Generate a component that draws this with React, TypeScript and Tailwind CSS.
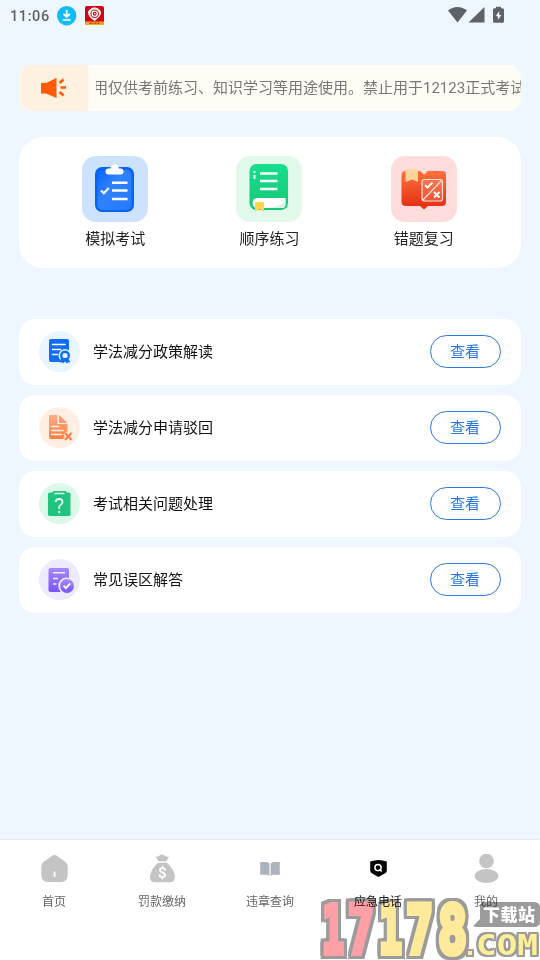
import type { ReactNode } from 'react';

const font = "font-[Roboto,'Noto_Sans_CJK_SC',sans-serif]";

function StatusBar() {
  return (
    <header className="flex h-8 items-center pl-[10px] pr-[35px] text-[#5f6368]">
      <span className="w-[47px] whitespace-nowrap pt-px text-[14.5px] font-medium tracking-[0.6px]">11:06</span>
      <svg className="block h-5 w-5" viewBox="0 0 20 20">
        <circle cx="9.700" cy="9.700" r="9.700" fill="#12bdf6" />
        <path d="M9.700 4v6.500M6.500 7.800l3.200 3.200 3.200-3.200M5.700 14h8" fill="none" stroke="#fff" strokeWidth="1.700" />
      </svg>
      <svg className="ml-2 block h-5 w-5" viewBox="0 0 20 20">
        <rect x="0" y="0" width="19" height="19" rx="2" fill="#cc0712" />
        <path d="M0 15.500h19V17a2 2 0 0 1-2 2H2a2 2 0 0 1-2-2z" fill="#f7a51c" />
        <path d="M3 6.500C3.500 3 7.500 1.500 9.500 1.500S15.500 3 16 6.500c0 3-2.500 5.500-6.500 8.500C5.500 12 3 9.500 3 6.500z" fill="#fff" />
        <circle cx="9.700" cy="7.700" r="4.300" fill="#cc0712" />
        <circle cx="9.700" cy="7.700" r="2.600" fill="none" stroke="#fff" strokeWidth="1.300" />
        <circle cx="9.700" cy="7.700" r=".8" fill="#fff" />
        <path d="M4.500 17.300h2m1 0h1m1 0h2m1 0h2" stroke="#c73812" strokeWidth="1.500" />
      </svg>
      <svg className="ml-auto block h-5 w-[58px]" viewBox="0 0 58 20">
        <path d="M1 4.500C6.500-.3 14.500-.3 20 4.500L10.500 16.500z" fill="#5f6368" />
        <path d="M37.500 1v15.500h-16z" fill="#5f6368" />
        <path d="M49 .8h5v1.500h1.500q1.500 0 1.500 1.500v11.500q0 1.500-1.500 1.500h-8q-1.500 0-1.500-1.500V3.800q0-1.500 1.500-1.500H49z" fill="#5f6368" />
        <path d="M52.200 5l-3.500 5.300h2.200V14l3.500-5h-2.200z" fill="#eef6ff" />
      </svg>
    </header>
  );
}

function Megaphone() {
  return (
    <svg className="block h-[22px] w-[26px]" viewBox="0 0 26 22">
      <path d="M0 6H5L15.500 1v20L5 16.500H0z" fill="#ff5b05" />
      <path d="M18.500 6l4-3.500M19.500 10.500h5.500M18.500 15l4 3.500" stroke="#ff5b05" strokeWidth="2.600" />
    </svg>
  );
}

function ExamIcon() {
  return (
    <svg className="block h-full w-full" viewBox="0 0 66 66">
      <defs>
        <linearGradient id="exam" x2="1" y2="1">
          <stop stopColor="#0965fc" />
          <stop offset=".4" stopColor="#2f82ff" />
          <stop offset="1" stopColor="#247aff" />
        </linearGradient>
      </defs>
      <rect x="13" y="11" width="39" height="45" rx="7" fill="#0864f6" />
      <rect x="15.500" y="14" width="34" height="40" rx="5" fill="url(#exam)" />
      <path d="M28.500 12.500a4.200 4.200 0 0 1 8.400 0h1.600q3 0 3 3t-3 3h-12q-3 0-3-3t3-3z" fill="#fff" />
      <path d="M30 26.700h15.500M30 34.500h15.500M30 43h15.500" stroke="#fff" strokeWidth="2.600" />
      <path d="M19 34.500l2.800 2.800 5-5.300" fill="none" stroke="#fff" strokeWidth="2" />
    </svg>
  );
}

function BookIcon() {
  return (
    <svg className="block h-full w-full" viewBox="0 0 66 66">
      <defs>
        <linearGradient id="book" x2="0" y2="1">
          <stop stopColor="#16df8e" />
          <stop offset="1" stopColor="#16c875" />
        </linearGradient>
      </defs>
      <rect x="13.500" y="8" width="38.500" height="46" rx="7" fill="url(#book)" />
      <path d="M49.500 42H22q-5.500 0-5.500 5t5.500 5h24q3.500 0 3.500-4z" fill="#fff" />
      <path d="M49.500 42v6q0 3-3.500 4H29q19-1 20.500-10z" fill="#d8f6e6" />
      <path d="M24 17.500h17.500M24 25h17.500M24 33h17.500" stroke="#fff" strokeWidth="2.500" />
      <path d="M18.500 15v2M18.500 19v4" stroke="#e7fff4" strokeWidth="2" />
      <path d="M19 46h9v10l-4.500-3-4.500 3z" fill="#ffd64d" />
    </svg>
  );
}

function MistakeIcon() {
  return (
    <svg className="block h-full w-full" viewBox="0 0 66 66">
      <defs>
        <linearGradient id="mistake" x2="0" y2="1">
          <stop stopColor="#ff713c" />
          <stop offset="1" stopColor="#e22c12" />
        </linearGradient>
      </defs>
      <path d="M15 15h14l4 3.500 4-3.500h14q4 0 4 4v27q0 4-4 4H37l-4 3.500-4-3.500H15q-4.500 0-4.500-4V19q0-4 4.500-4z" fill="url(#mistake)" />
      <path d="M14.500 13.500H27v12.500l-6-2.500-6.500 2.500z" fill="#ffd49a" />
      <rect x="31" y="23.500" width="20.500" height="21.500" rx="2.500" fill="#ffffff22" stroke="#ffe1d8" strokeWidth="1.200" />
      <path d="M32 44l18.500-19.500" stroke="#ffe1d8" strokeWidth="1.200" />
      <path d="M34 29l2.500 2.500 5-5M43 36l5.500 5.500m0-5.500L43 41.500" fill="none" stroke="#fff" strokeWidth="1.900" />
    </svg>
  );
}

function PolicyIcon() {
  return (
    <svg className="block h-full w-full" viewBox="0 0 41 41">
      <rect x="10" y="8" width="20" height="23" rx="2" fill="#106dff" />
      <path d="M13.500 13.500h12.500M13.500 18.500h8M13.500 23.500h5" stroke="#fff" strokeWidth="1.500" strokeLinecap="round" />
      <circle cx="26" cy="24.500" r="6.500" fill="#e9f5ff" />
      <path d="M22 27l-1.500 4.500 2.500-.3 1 1.300 2-2 2 2 1-1.300 2.500.3L29 27z" fill="#106dff" />
      <circle cx="26" cy="24.500" r="3.800" fill="#e9f5ff" stroke="#106dff" strokeWidth="2.400" />
    </svg>
  );
}

function RejectIcon() {
  return (
    <svg className="block h-full w-full" viewBox="0 0 41 41">
      <defs>
        <linearGradient id="reject" x2="0" y2="1">
          <stop stopColor="#ffad85" />
          <stop offset="1" stopColor="#ff7f3e" />
        </linearGradient>
      </defs>
      <path d="M10 8h8.500v9H28.500v15H12q-2 0-2-2z" fill="url(#reject)" />
      <path d="M20 8l8.500 8H20z" fill="#ff9b6b" />
      <path d="M12.500 19.500h7M12.500 23.500h12M12.500 27.500h10" stroke="#fff4eb" strokeWidth="1.300" strokeLinecap="round" />
      <path d="M26 26l7 7m0-7l-7 7" stroke="#ffeee2" strokeWidth="5" />
      <path d="M26 26l6.500 7m0-7L26 33" stroke="#ff8145" strokeWidth="2.300" />
    </svg>
  );
}

function QuestionIcon() {
  return (
    <svg className="block h-full w-full" viewBox="0 0 41 41">
      <rect x="9" y="9.500" width="22.500" height="23.500" rx="1.800" fill="#20c47f" />
      <path d="M15 8h11q1.500 0 1.500 1.500v3h-14v-3Q13.500 8 15 8z" fill="#20c47f" />
      <path d="M15 11.300q0-1.500 1.300-1.500h8.200q1.300 0 1.300 1.500z" fill="#dcfbed" />
      <path d="M16.800 19q0-3 3.400-3 3.300 0 3.300 3 0 1.700-1.700 2.700-1.600 1-1.600 2.700V26" fill="none" stroke="#dffff0" strokeWidth="1.800" />
      <circle cx="20.200" cy="29" r="1.200" fill="#dffff0" />
    </svg>
  );
}

function AnswerIcon() {
  return (
    <svg className="block h-full w-full" viewBox="0 0 41 41">
      <defs>
        <linearGradient id="answer" x2="0" y2="1">
          <stop stopColor="#a489ff" />
          <stop offset="1" stopColor="#7755fa" />
        </linearGradient>
      </defs>
      <rect x="9.500" y="9" width="20.500" height="24" rx="2" fill="url(#answer)" />
      <path d="M14 13.700h12M14 19.500h5M14 25h3.500" stroke="#f2edff" strokeWidth="1.600" />
      <circle cx="27.500" cy="26.800" r="8.300" fill="#eeeaff" />
      <circle cx="28" cy="27" r="6.900" fill="url(#answer)" />
      <path d="M24.500 26.700l2.400 2.400 4.300-4.800" fill="none" stroke="#fff" strokeWidth="1.900" />
    </svg>
  );
}

function Shortcut({ label, tone, children }: { label: string; tone: string; children: ReactNode }) {
  return (
    <div className="flex flex-col items-center">
      <div className={`h-[66px] w-[66px] rounded-[14px] ${tone}`}>{children}</div>
      <span className="mt-[5px] text-[15px] leading-6 text-[#222]">{label}</span>
    </div>
  );
}

function Row({ label, tone, children }: { label: string; tone: string; children: ReactNode }) {
  return (
    <li className="flex h-[66px] items-start rounded-2xl bg-white px-5">
      <div className={`mt-3 h-[41px] w-[41px] rounded-full ${tone}`}>{children}</div>
      <span className="ml-[13px] text-[15px] leading-[66px] text-[#111]">{label}</span>
      <button className="ml-auto mt-4 h-[33px] w-[71px] rounded-full border border-[#2679e7] pr-px text-[15px] leading-[33px] text-[#2679e7]">
        查看
      </button>
    </li>
  );
}

function NavItem({ label, active, children }: { label: string; active?: boolean; children: ReactNode }) {
  return (
    <div className={`flex flex-col items-center pt-[14px] text-xs ${active ? 'text-[#222]' : 'text-[#666]'}`}>
      <svg className="block h-[30px] w-[30px]" viewBox="0 0 30 30">{children}</svg>
      <span className="mt-[10px] leading-4">{label}</span>
    </div>
  );
}

const digits = [
  { char: '1', x: 8, width: 22, fill: '#ffa0a7' },
  { char: '7', x: 34, width: 26, fill: '#ffa0a7' },
  { char: '1', x: 65, width: 23, fill: '#ffe99b' },
  { char: '7', x: 92, width: 27, fill: '#ffe99b' },
  { char: '8', x: 124, width: 29, fill: '#ffe99b' },
];

function Watermark() {
  return (
    <svg
      className="pointer-events-none absolute bottom-0 right-0 h-[62px] w-[226px] mix-blend-multiply"
      viewBox="0 0 226 62"
      strokeLinejoin="miter"
      fontFamily="DejaVu Sans Mono, monospace"
      fontWeight="700"
    >
      <g
        className="[filter:drop-shadow(3px_0_0_#9b9b9b)_drop-shadow(-3px_0_0_#9b9b9b)_drop-shadow(0_3px_0_#9b9b9b)_drop-shadow(0_-3px_0_#9b9b9b)]"
        fontSize="66"
        strokeWidth="6"
      >
        {digits.map((d) => (
          <text key={d.x} x={d.x} y="55" textLength={d.width} lengthAdjust="spacingAndGlyphs" fill={d.fill} stroke={d.fill}>
            {d.char}
          </text>
        ))}
      </g>
      <path d="M169 4h51q6 0 6 6v13q0 6-6 6h-58l-3-1 7-7V7z" fill="#9b9b9b" />
      <text x="169" y="22.500" fontFamily="Noto Sans CJK SC, sans-serif" fontSize="17" fontWeight="900" fill="#fff" textLength="52">下载站</text>
      <g
        className="[filter:drop-shadow(2px_0_0_#9b9b9b)_drop-shadow(-2px_0_0_#9b9b9b)_drop-shadow(0_2px_0_#9b9b9b)_drop-shadow(0_-2px_0_#9b9b9b)]"
        fontSize="28"
        fill="#ffef97"
      >
        <rect x="154" y="53" width="4" height="4" />
        <text x="162" y="57" textLength="62" lengthAdjust="spacingAndGlyphs">COM</text>
      </g>
    </svg>
  );
}

export default function App() {
  return (
    <div className={`relative flex h-[960px] w-[540px] flex-col overflow-hidden bg-[#eef6ff] ${font}`}>
      <StatusBar />
      <main className="flex-1 px-[19px] pt-[33px]">
        <section className="flex h-[46px] overflow-hidden rounded-xl bg-[#fffbf5]">
          <div className="flex w-[69px] shrink-0 items-center justify-center bg-[#fff1df]">
            <Megaphone />
          </div>
          <div className="ml-2 flex flex-1 items-center overflow-hidden">
            <span className="-ml-[3px] whitespace-nowrap text-[15px] text-[#777]">
              用仅供考前练习、知识学习等用途使用。禁止用于12123正式考试
            </span>
          </div>
        </section>
        <section className="mt-[26px] grid h-[131px] grid-cols-3 rounded-[24px] bg-white pl-[19px] pr-5 pt-[19px]">
          <Shortcut label="模拟考试" tone="bg-[#cce2ff]"><ExamIcon /></Shortcut>
          <Shortcut label="顺序练习" tone="bg-[#e0f9eb]"><BookIcon /></Shortcut>
          <Shortcut label="错题复习" tone="bg-[#ffdcdc]"><MistakeIcon /></Shortcut>
        </section>
        <ul className="mt-[51px] flex flex-col gap-[10px]">
          <Row label="学法减分政策解读" tone="bg-[#e9f5ff]"><PolicyIcon /></Row>
          <Row label="学法减分申请驳回" tone="bg-[#ffeee2]"><RejectIcon /></Row>
          <Row label="考试相关问题处理" tone="bg-[#dcf8eb]"><QuestionIcon /></Row>
          <Row label="常见误区解答" tone="bg-[#eeeaff]"><AnswerIcon /></Row>
        </ul>
      </main>
      <nav className="grid h-[121px] grid-cols-5 border-t border-[#e7eaed] bg-white">
        <NavItem label="首页">
          <path d="M12.500 2.200q3-2.300 6 0l8 5.700q2.200 1.600 2.200 4.300v9q0 6.700-6.700 6.700H9q-6.700 0-6.700-6.700v-9q0-2.700 2.200-4.300z" fill="#c4c4c4" />
          <path d="M15.500 17.500v5.500" stroke="#fff" strokeWidth="1.800" />
        </NavItem>
        <NavItem label="罚款缴纳">
          <path d="M8 2.500q2.500 1 4.300-.7 2.700-2.600 5.600 0 2 1.700 4.600.7-2 2-3 4.800h-8.200Q10.500 4.500 8 2.500zM11 8.800h9q7.700 7 7.900 14.500 0 5-5 5H8q-5 0-5-5Q3.200 15.800 11 8.800z" fill="#c4c4c4" />
          <text x="15.200" y="24" textAnchor="middle" fontFamily="Roboto" fontSize="15" fontWeight="700" fill="#fff">$</text>
        </NavItem>
        <NavItem label="违章查询">
          <path d="M5.200 8h7l2.200 1.400V22l-2-1.200H5.200zM24.800 8h-7l-2.200 1.400V22l2-1.200h7.200z" fill="#adb3bd" />
        </NavItem>
        <NavItem label="应急电话" active>
          <path d="M15.500 6q4 .1 8.300 1.600v9q0 2-2 3L15.500 23l-6.300-3.400q-2-1-2-3v-9Q11.500 6.100 15.500 6z" fill="#050505" />
          <circle cx="15" cy="13.600" r="3.100" fill="none" stroke="#fff" strokeWidth="1.500" />
          <path d="M16.700 15.500l2 2" stroke="#fff" strokeWidth="1.600" />
        </NavItem>
        <NavItem label="我的">
          <circle cx="15.500" cy="7" r="7.300" fill="#c4c4c4" />
          <ellipse cx="15.500" cy="22" rx="11.800" ry="7" fill="#c4c4c4" />
        </NavItem>
      </nav>
      <Watermark />
    </div>
  );
}
